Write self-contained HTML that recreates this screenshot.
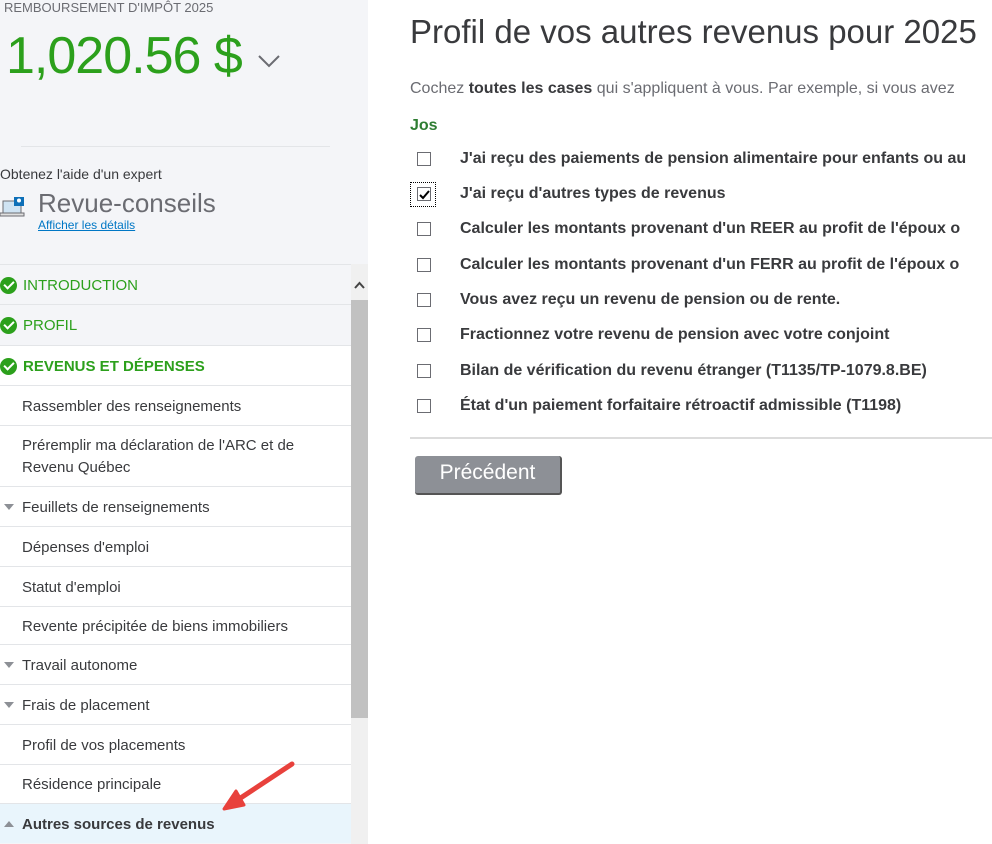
<!DOCTYPE html>
<html><head><meta charset="utf-8"><style>
*{margin:0;padding:0;box-sizing:border-box}
body{width:992px;height:844px;overflow:hidden;background:#fff;font-family:"Liberation Sans",sans-serif;position:relative;color:#393a3d}
#side{position:absolute;left:0;top:0;width:368px;height:844px;background:#f4f5f8}
.abs{position:absolute;white-space:nowrap}
#nav{position:absolute;left:0;top:264px;width:351px}
.row{border-top:1px solid #e3e5e8;height:40px;display:flex;align-items:center;font-size:15px;color:#393a3d;padding-left:22px;background:#fff;padding-top:1px}
.row.g{background:#f4f5f8;color:#2ca01c;font-size:15px;padding-left:23px}
.row.b{color:#2ca01c;font-weight:bold}
.chk{position:absolute;left:0;width:17px;height:17px;border-radius:50%;background:#2ca01c}
.chk::after{content:"";position:absolute;left:4px;top:4px;width:8px;height:4px;border-left:2.5px solid #fff;border-bottom:2.5px solid #fff;transform:rotate(-45deg)}
.tri{position:absolute;left:4px;width:0;height:0;border-left:5px solid transparent;border-right:5px solid transparent;border-top:6px solid #8d9096}
.cb{position:absolute;left:417px;width:14px;height:14px;border:1px solid #6b6c72;background:#fff}
.lbl{position:absolute;left:460px;font-size:16px;font-weight:bold;color:#393a3d;white-space:nowrap}
</style></head><body>
<div id="side">
<div class="abs" style="left:4px;top:0;font-size:13px;color:#6b6c72">REMBOURSEMENT D'IMPÔT 2025</div>
<div class="abs" style="left:6px;top:26px;font-size:52px;color:#2ca01c;letter-spacing:-1px">1,020.56 $</div>
<svg class="abs" style="left:257px;top:53px" width="24" height="16"><path d="M2 3 L12 13 L22 3" fill="none" stroke="#6b6c72" stroke-width="2"/></svg>
<div class="abs" style="left:21px;top:146px;width:309px;border-top:1px solid #e3e5e8"></div>
<div class="abs" style="left:0;top:166px;font-size:14px;color:#393a3d">Obtenez l'aide d'un expert</div>
<svg class="abs" style="left:0;top:196px" width="26" height="24"><rect x="3" y="5" width="18" height="12" fill="#cfe3f3" stroke="#6b6c72"/><rect x="0" y="17" width="24" height="3" fill="#e0e0e0" stroke="#6b6c72"/><rect x="14" y="1" width="10" height="9" fill="#0d6fb8"/><circle cx="19" cy="4.5" r="2" fill="#fff"/></svg>
<div class="abs" style="left:38px;top:188px;font-size:26px;color:#6b6c72">Revue-conseils</div>
<div class="abs" style="left:38px;top:218px;font-size:12px;color:#0077c5;text-decoration:underline">Afficher les détails</div>
<div id="nav">
<div class="row g" style="position:relative"><span class="chk"></span>INTRODUCTION</div>
<div class="row g" style="position:relative;height:41px"><span class="chk"></span>PROFIL</div>
<div class="row b" style="position:relative;padding-left:23px"><span class="chk"></span>REVENUS ET DÉPENSES</div>
<div class="row">Rassembler des renseignements</div>
<div class="row" style="height:61px;line-height:22px">Préremplir ma déclaration de l'ARC et de<br>Revenu Québec</div>
<div class="row" style="position:relative"><span class="tri"></span>Feuillets de renseignements</div>
<div class="row">Dépenses d'emploi</div>
<div class="row">Statut d'emploi</div>
<div class="row" style="height:38px">Revente précipitée de biens immobiliers</div>
<div class="row" style="position:relative"><span class="tri"></span>Travail autonome</div>
<div class="row" style="position:relative"><span class="tri"></span>Frais de placement</div>
<div class="row">Profil de vos placements</div>
<div class="row" style="height:39px">Résidence principale</div>
<div class="row" style="position:relative;background:#e9f5fc;font-weight:bold"><span class="tri" style="border-top:0;border-bottom:6px solid #8d9096"></span>Autres sources de revenus</div>
</div>
<div class="abs" style="left:351px;top:264px;width:17px;height:580px;background:#f0f0f0"></div>
<div class="abs" style="left:351px;top:300px;width:17px;height:418px;background:#c1c1c1"></div>
<svg class="abs" style="left:353px;top:280px" width="13" height="10"><path d="M2 8 L6.5 3 L11 8" fill="none" stroke="#444" stroke-width="2"/></svg>
</div>
<svg class="abs" style="left:0;top:0;pointer-events:none" width="992" height="844"><line x1="292" y1="764" x2="236" y2="801" stroke="#e8413c" stroke-width="5" stroke-linecap="round"/><path d="M224 809 L236 791 L244 805 Z" fill="#e8413c" stroke="#e8413c" stroke-width="3" stroke-linejoin="round"/></svg>
<div class="abs" style="left:410px;top:13px;font-size:33px;color:#393a3d">Profil de vos autres revenus pour 2025</div>
<div class="abs" style="left:410px;top:80px;font-size:16px;color:#6b6c72">Cochez <b style="color:#393a3d">toutes les cases</b> qui s'appliquent à vous. Par exemple, si vous avez</div>
<div class="abs" style="left:410px;top:117px;font-size:16px;font-weight:bold;color:#2e7d32">Jos</div>
<div class="cb" style="top:152px"></div><div class="lbl" style="top:150px">J'ai reçu des paiements de pension alimentaire pour enfants ou au</div>
<div class="abs" style="left:410px;top:182px;width:26px;height:25px;border:1px dotted #000"></div>
<div class="cb" style="top:187px"></div><svg class="abs" style="left:419px;top:189px" width="11" height="11"><path d="M1 6 L4 9 L10 2" fill="none" stroke="#000" stroke-width="2"/></svg><div class="lbl" style="top:185px">J'ai reçu d'autres types de revenus</div>
<div class="cb" style="top:222px"></div><div class="lbl" style="top:220px">Calculer les montants provenant d'un REER au profit de l'époux o</div>
<div class="cb" style="top:258px"></div><div class="lbl" style="top:256px">Calculer les montants provenant d'un FERR au profit de l'époux o</div>
<div class="cb" style="top:293px"></div><div class="lbl" style="top:291px">Vous avez reçu un revenu de pension ou de rente.</div>
<div class="cb" style="top:328px"></div><div class="lbl" style="top:326px">Fractionnez votre revenu de pension avec votre conjoint</div>
<div class="cb" style="top:364px"></div><div class="lbl" style="top:362px">Bilan de vérification du revenu étranger (T1135/TP-1079.8.BE)</div>
<div class="cb" style="top:399px"></div><div class="lbl" style="top:397px">État d'un paiement forfaitaire rétroactif admissible (T1198)</div>
<div class="abs" style="left:410px;top:437px;width:582px;border-top:2px solid #dcdcdc"></div>
<div class="abs" style="left:415px;top:456px;width:147px;height:39px;background:#8d9096;border-radius:3px;border-right:2px solid #555;border-bottom:2px solid #555;color:#fff;font-size:21px;text-align:center;line-height:34px">Précédent</div>
</body></html>
